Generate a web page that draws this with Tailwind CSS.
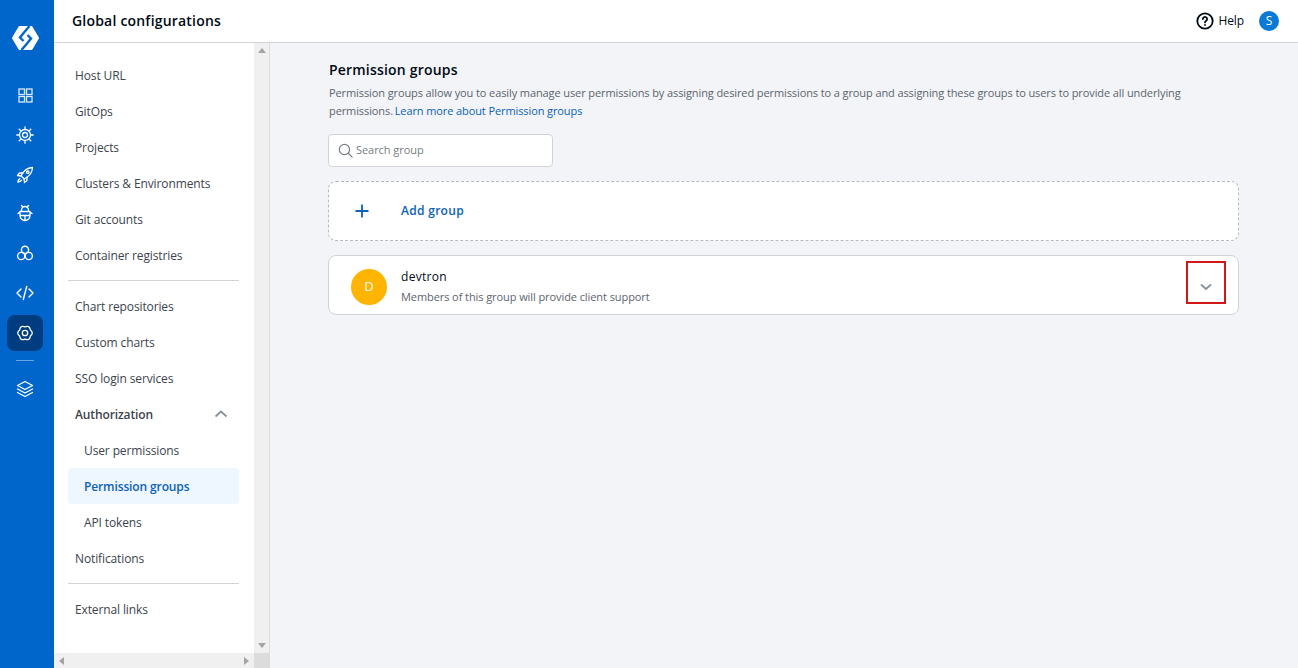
<!DOCTYPE html>
<html lang="en">
<head>
    <meta charset="UTF-8">
    <meta name="viewport" content="width=device-width, initial-scale=1.0">
    <title>Global configurations</title>
    <script src="https://cdn.jsdelivr.net/npm/@tailwindcss/browser@4"></script>
</head>
<body class="h-[668px] w-[1298px] overflow-hidden bg-[#f2f4f7] font-['Open_Sans',sans-serif]">
    <div class="flex h-full">
        <!-- Left rail -->
        <nav class="flex h-full w-[54px] shrink-0 flex-col items-center bg-[#0066cc] pr-[4px] pt-[25px] text-white">
            <svg class="h-[26px] w-[27px]" viewBox="0 0 27 26">
                <path fill="#fff" stroke="#fff" stroke-width="2" stroke-linejoin="round" d="M7.500 2h12L26 13l-6.500 11h-12L1 13z"/>
                <path fill="none" stroke="#0066cc" stroke-width="2.400" d="M17.500 1 12 7.500 8 12.500l3.500 3.500M9.500 25l5.500-6.500 4-5L15.500 10"/>
            </svg>
            <div class="mt-[26px] flex h-[36px] w-[36px] items-center justify-center">
                <svg class="h-[15px] w-[15px]" viewBox="0 0 15 15" fill="none" stroke="#dbe9f8" stroke-width="1.300"><rect x="1" y="1" width="5.500" height="5.500"/><rect x="8.500" y="1" width="5.500" height="5.500"/><rect x="1" y="8.500" width="5.500" height="5.500"/><rect x="8.500" y="8.500" width="5.500" height="5.500"/></svg>
            </div>
            <div class="mt-[4px] flex h-[36px] w-[36px] items-center justify-center">
                <svg class="h-[18px] w-[18px]" viewBox="0 0 18 18" fill="none" stroke="#fff" stroke-width="1.300" stroke-linecap="round"><circle cx="9" cy="9" r="5.500"/><circle cx="9" cy="9" r="2.500"/><path d="M9 .8v2.700M9 14.500v2.700M.8 9h2.700M14.500 9h2.700M3.200 3.200 5.100 5.100M12.900 12.900l1.900 1.900M3.200 14.800l1.900-1.900M12.900 5.100l1.900-1.900"/></svg>
            </div>
            <div class="mt-[4px] flex h-[36px] w-[36px] items-center justify-center">
                <svg class="h-[18px] w-[18px]" viewBox="0 0 18 18" fill="none" stroke="#fff" stroke-width="1.300" stroke-linejoin="round" stroke-linecap="round"><path d="M16.500 1.500c-4 .2-7 1.800-9.500 5.200L5 9.800 8.200 13l3.100-2c3.400-2.500 5-5.500 5.200-9.500z"/><path d="M6.800 7H3.500L1.500 9.500l3.500.5M11 11.200v3.300l-2.500 2-.5-3.500"/><path d="M3.800 12.500C2.500 13.300 2 15 1.800 16.200c1.200-.2 2.900-.7 3.700-2"/><circle cx="11.800" cy="6.200" r="1.200"/></svg>
            </div>
            <div class="mt-[2px] flex h-[36px] w-[36px] items-center justify-center">
                <svg class="h-[18px] w-[18px]" viewBox="0 0 18 18" fill="none" stroke="#fff" stroke-width="1.300" stroke-linecap="round" stroke-linejoin="round"><path d="M4 7.500h10v4a5 5 0 0 1-10 0zM5.500 7.500V6a3.500 3.500 0 0 1 7 0v1.500M9 11.500v5M4 11.500h10M5.500 1.500l1.300 1.500M12.500 1.500 11.200 3M2 9.500 4 8M16 9.500 14 8"/></svg>
            </div>
            <div class="mt-[4px] flex h-[36px] w-[36px] items-center justify-center">
                <svg class="h-[18px] w-[18px]" viewBox="0 0 18 18" fill="none" stroke="#fff" stroke-width="1.400"><circle cx="9" cy="5.800" r="3.600"/><circle cx="5.200" cy="12" r="3.600"/><circle cx="12.800" cy="12" r="3.600"/></svg>
            </div>
            <div class="mt-[4px] flex h-[36px] w-[36px] items-center justify-center">
                <svg class="h-[18px] w-[18px]" viewBox="0 0 18 18" fill="none" stroke="#fff" stroke-width="1.400" stroke-linecap="round" stroke-linejoin="round"><path d="M5 5 1 9l4 4M13 5l4 4-4 4M10.700 2.500 7.300 15.500"/></svg>
            </div>
            <div class="mt-[4px] flex h-[36px] w-[36px] items-center justify-center rounded-lg bg-[#003d80]">
                <svg class="h-[18px] w-[18px]" viewBox="0 0 18 18" fill="none" stroke="#fff" stroke-width="1.300" stroke-linejoin="round"><path d="M14.370 5.900Q18.200 9 14.370 12.100 13.600 17 9 15.200 4.400 17 3.630 12.100-.2 9 3.630 5.900 4.400 1 9 2.800 13.600 1 14.370 5.900z"/><circle cx="9" cy="9" r="2.700"/></svg>
            </div>
            <div class="mt-[9px] h-px w-[18px] bg-white/40"></div>
            <div class="mt-[10px] flex h-[36px] w-[36px] items-center justify-center">
                <svg class="h-[18px] w-[18px]" viewBox="0 0 18 18" fill="none" stroke="#fff" stroke-width="1.300" stroke-linejoin="round" stroke-linecap="round"><path d="M9 1.500 16.500 5.500 9 9.500 1.500 5.500z"/><path d="M1.500 9 9 13l7.500-4M1.500 12.500l7.500 4 7.500-4"/></svg>
            </div>
        </nav>

        <div class="flex min-w-0 flex-1 flex-col">
            <!-- Header -->
            <header class="flex h-[43px] shrink-0 items-center justify-between border-b border-[#d0d4d9] bg-white pl-[18px] pr-[19px]">
                <h1 class="text-[14px] leading-[20px] font-semibold tracking-[.2px] text-[#000a14]">Global configurations</h1>
                <div class="flex items-center">
                    <svg class="h-[18px] w-[18px]" viewBox="0 0 18 18" fill="none" stroke="#000a14" stroke-width="1.800" stroke-linecap="round"><circle cx="9" cy="9" r="7.700"/><path d="M6.900 7a2.100 2.100 0 1 1 3.200 1.800c-.7.400-1.100.8-1.100 1.600"/><path d="M9 13v.1"/></svg>
                    <span class="ml-[4px] text-[12px] leading-[18px] tracking-[-.1px] text-[#000a14]">Help</span>
                    <div class="ml-[15px] flex h-[20px] w-[20px] items-center justify-center rounded-full bg-[#0b79d6] text-[12px] text-white">S</div>
                </div>
            </header>

            <div class="flex min-h-0 flex-1">
                <!-- Settings sidebar with its scrollbars -->
                <aside class="relative w-[216px] shrink-0 border-r border-[#d9dce1] bg-white">
                    <div class="h-full w-[199px] ml-[14px] pt-[14px] text-[12px] tracking-[-.12px] text-[#3b444c]">
                        <a class="flex h-[36px] items-center px-[7px] pt-[2px]">Host URL</a>
                        <a class="flex h-[36px] items-center px-[7px] pt-[2px]">GitOps</a>
                        <a class="flex h-[36px] items-center px-[7px] pt-[2px]">Projects</a>
                        <a class="flex h-[36px] items-center px-[7px] pt-[2px]">Clusters &amp; Environments</a>
                        <a class="flex h-[36px] items-center px-[7px] pt-[2px]">Git accounts</a>
                        <a class="flex h-[36px] items-center px-[7px] pt-[2px]">Container registries</a>
                        <div class="my-[7px] h-px w-[171px] bg-[#d0d4d9]"></div>
                        <a class="flex h-[36px] items-center px-[7px] pt-[2px]">Chart repositories</a>
                        <a class="flex h-[36px] items-center px-[7px] pt-[2px]">Custom charts</a>
                        <a class="flex h-[36px] items-center px-[7px] pt-[2px]">SSO login services</a>
                        <a class="flex h-[36px] w-[171px] items-center justify-between pl-[7px] pr-[11px] font-semibold">
                            <span class="pt-[2px]">Authorization</span>
                            <svg class="h-[14px] w-[14px]" viewBox="0 0 14 14" fill="none" stroke="#8a9199" stroke-width="1.800"><path d="M1.500 9.500 7 4.500l5.500 5"/></svg>
                        </a>
                        <a class="flex h-[36px] items-center pl-[16px] pt-[2px]">User permissions</a>
                        <a class="flex h-[36px] w-[171px] items-center rounded bg-[#eef6ff] pl-[16px] pt-[2px] font-semibold text-[#0b62b8]">Permission groups</a>
                        <a class="flex h-[36px] items-center pl-[16px] pt-[2px]">API tokens</a>
                        <a class="flex h-[36px] items-center px-[7px] pt-[2px]">Notifications</a>
                        <div class="my-[7px] h-px w-[171px] bg-[#d0d4d9]"></div>
                        <a class="flex h-[36px] items-center px-[7px] pt-[2px]">External links</a>
                    </div>
                    <!-- vertical scrollbar -->
                    <div class="absolute top-0 right-0 bottom-0 flex w-[15px] flex-col items-center justify-between bg-[#f0f0f0] pt-[5px] pb-[20px]">
                        <div class="h-0 w-0 border-x-[4px] border-b-[5px] border-x-transparent border-b-[#a3a3a3]"></div>
                        <div class="h-0 w-0 border-x-[4px] border-t-[5px] border-x-transparent border-t-[#a3a3a3]"></div>
                    </div>
                    <!-- horizontal scrollbar -->
                    <div class="absolute right-0 bottom-0 left-0 flex h-[15px] items-center bg-[#f0f0f0] pl-[5px]">
                        <div class="h-0 w-0 border-y-[4px] border-r-[5px] border-y-transparent border-r-[#a3a3a3]"></div>
                        <div class="ml-[180px] h-0 w-0 border-y-[4px] border-l-[5px] border-y-transparent border-l-[#a3a3a3]"></div>
                        <div class="absolute right-0 bottom-0 h-[15px] w-[15px] bg-[#dcdcdc]"></div>
                    </div>
                </aside>

                <!-- Main -->
                <main class="min-w-0 flex-1 pt-[17px] pl-[58px]">
                    <div class="w-[911px]">
                        <h2 class="ml-px text-[14px] leading-[20px] font-semibold tracking-[.2px] text-[#000a14]">Permission groups</h2>
                        <p class="mt-[4px] ml-px text-[11px] leading-[18px] tracking-[-.1px] text-[#5c656e]">Permission groups allow you to easily manage user permissions by assigning desired permissions to a group and assigning these groups to users to provide all underlying permissions. <a class="-ml-px text-[#0b62b8]">Learn more about Permission groups</a></p>
                        <div class="mt-[14px] flex h-[33px] w-[225px] items-center rounded border border-[#d0d4d9] bg-white pl-[9px]">
                            <svg class="h-[15px] w-[15px]" viewBox="0 0 14 14" fill="none" stroke="#767d84" stroke-width="1.100" stroke-linecap="round"><circle cx="6" cy="6" r="4.800"/><path d="m9.600 9.600 3.600 3.600"/></svg>
                            <span class="ml-[3px] text-[11px] tracking-[-.05px] text-[#767d84]">Search group</span>
                        </div>
                        <div class="mt-[14px] flex h-[60px] items-center rounded-lg border border-dashed border-[#b5bac0] bg-white pl-[26px]">
                            <svg class="h-[14px] w-[14px]" viewBox="0 0 14 14" fill="none" stroke="#0b62b8" stroke-width="1.800"><path d="M7 .5v13M.5 7h13"/></svg>
                            <span class="ml-[32px] text-[12px] font-semibold tracking-[.3px] text-[#0b62b8]">Add group</span>
                        </div>
                        <div class="mt-[14px] flex h-[60px] rounded-lg border border-[#d0d4d9] bg-white pl-[22px]">
                            <div class="mt-[13px] flex h-[36px] w-[36px] items-center justify-center rounded-full bg-[#ffb400] text-[13px] text-white">D</div>
                            <div class="mt-[12px] ml-[14px]">
                                <div class="text-[12px] leading-[18px] tracking-[.3px] text-[#000a14]">devtron</div>
                                <div class="mt-[3px] text-[11px] leading-[16px] tracking-[-.08px] text-[#5c656e]">Members of this group will provide client support</div>
                            </div>
                            <div class="mt-[5px] mr-[12px] ml-auto flex h-[43px] w-[40px] items-center justify-center border-2 border-[#d01818] pt-[9px]">
                                <svg class="h-[14px] w-[14px]" viewBox="0 0 14 14" fill="none" stroke="#8a9199" stroke-width="1.800"><path d="m2 4.500 5 4.500 5-4.500"/></svg>
                            </div>
                        </div>
                    </div>
                </main>
            </div>
        </div>
    </div>
</body>
</html>
